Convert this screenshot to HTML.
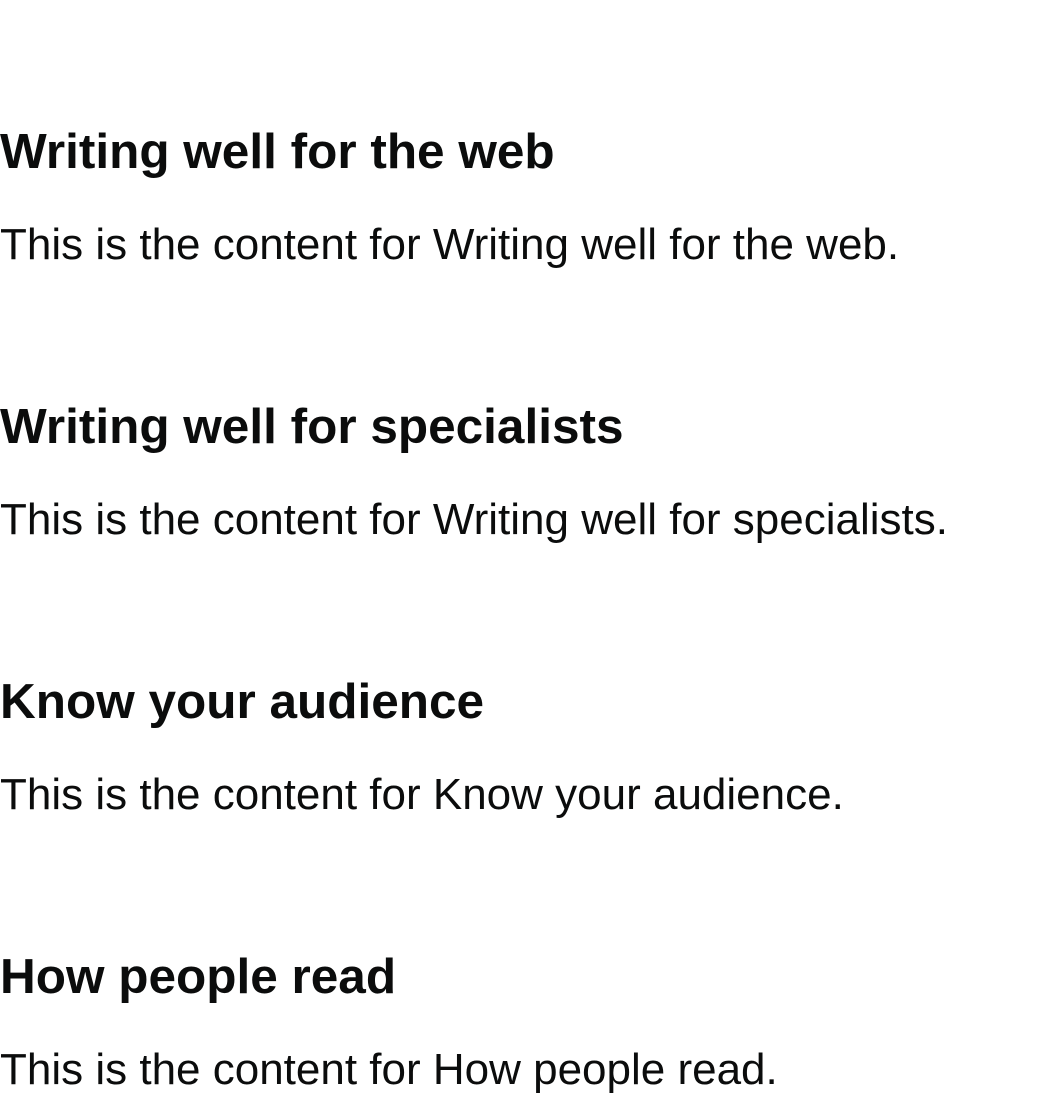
<!DOCTYPE html>
<html><head><style>
html,body{margin:0;background:#fff;width:1037px;height:1100px;overflow:hidden}
div{position:absolute;left:0;white-space:nowrap;line-height:normal;color:#0b0c0c;font-family:"Liberation Sans",sans-serif}
.h{font-weight:bold;font-size:49.5px}
.p{font-size:44px}
</style></head><body>
<div class="h" style="top:123px">Writing well for the web</div>
<div class="p" style="top:220px">This is the content for Writing well for the web.</div>
<div class="h" style="top:398px">Writing well for specialists</div>
<div class="p" style="top:495px">This is the content for Writing well for specialists.</div>
<div class="h" style="top:673px">Know your audience</div>
<div class="p" style="top:770px">This is the content for Know your audience.</div>
<div class="h" style="top:948px">How people read</div>
<div class="p" style="top:1045px">This is the content for How people read.</div>
</body></html>
